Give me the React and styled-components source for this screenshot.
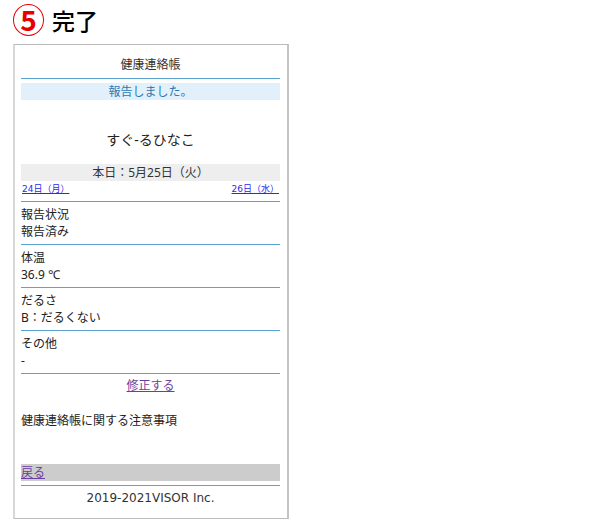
import React from "react";
//styles
import styled, { createGlobalStyle } from "styled-components";

const reports = [
  { label: "報告状況", value: "報告済み" },
  { label: "体温", value: "36.9 ℃" },
  { label: "だるさ", value: "B：だるくない" },
  { label: "その他", value: "-" },
];

const App = () => {
  return (
    <>
      <GlobalStyle />
      <Page>
        <StepHeading>
          <StepNumber>5</StepNumber>
          完了
        </StepHeading>
        <Card>
          <Title>健康連絡帳</Title>
          <Message role="status">報告しました。</Message>
          <Name>すぐ-るひなこ</Name>
          <Today>本日：5月25日（火）</Today>
          <DayNav>
            <a href="#prev">24日（月）</a>
            <a href="#next">26日（水）</a>
          </DayNav>
          <Report>
            {reports.map(({ label, value }) => (
              <Entry key={label}>
                <dt>{label}</dt>
                <dd>{value}</dd>
              </Entry>
            ))}
          </Report>
          <Edit>
            <StyledLink href="#edit">修正する</StyledLink>
          </Edit>
          <Notice>健康連絡帳に関する注意事項</Notice>
          <BackBar>
            <StyledLink href="#back">戻る</StyledLink>
          </BackBar>
          <Footer>2019-2021VISOR Inc.</Footer>
        </Card>
      </Page>
    </>
  );
};

export default App;

const line = "1px solid #5ba3d0";

const GlobalStyle = createGlobalStyle`
  * {
    margin: 0;
    padding: 0;
    box-sizing: border-box;
  }
  body {
    background: #fff;
    color: #333;
    font-family: "Noto Sans", "Noto Sans CJK JP", sans-serif;
    font-size: 12px;
    line-height: 17px;
  }
`;

const Page = styled.main`
  padding: 4px 13px 3px;
`;

const StepHeading = styled.h1`
  display: flex;
  align-items: center;
  gap: 8px;
  margin-bottom: 8px;
  color: #000;
  font-family: "Noto Sans CJK JP", sans-serif;
  font-size: 23px;
  font-weight: 500;
  line-height: 32px;
`;

const StepNumber = styled.span`
  width: 31px;
  height: 32px;
  border: 1px solid #e60000;
  border-radius: 50%;
  color: #e60000;
  font-size: 28px;
  font-weight: 700;
  line-height: 28px;
  text-align: center;
`;

const Card = styled.section`
  max-width: 276px;
  padding: 11px 7px 11px 6px;
  border: 1px solid #bbb;
  border-left: 2px solid #d8d8d8;
  border-right: 2px solid #c4c4c4;
`;

const Title = styled.h2`
  margin-bottom: 4px;
  padding-bottom: 5px;
  border-bottom: ${line};
  font-size: 12px;
  font-weight: 400;
  text-align: center;
`;

const Message = styled.p`
  background: #e2f0fc;
  color: #2a7ab5;
  text-align: center;
`;

const Name = styled.p`
  padding: 28px 0 12px;
  color: #222;
  font-size: 14px;
  line-height: 24px;
  text-align: center;
`;

const Today = styled.p`
  background: #eee;
  text-align: center;
`;

const DayNav = styled.nav`
  display: flex;
  justify-content: space-between;
  padding: 0 1px 3px;
  font-family: "DejaVu Sans", "Noto Sans CJK JP", sans-serif;
  font-size: 9px;
  a {
    color: #2a2aee;
  }
`;

const Report = styled.dl`
  border-bottom: ${line};
  color: #222;
`;

const Entry = styled.div`
  padding: 4px 0;
  border-top: ${line};
`;

const StyledLink = styled.a`
  color: #6b3fa0;
`;

const Edit = styled.p`
  padding-top: 3px;
  text-align: center;
`;

const Notice = styled.p`
  padding: 18px 0 35px;
  color: #222;
`;

const BackBar = styled.div`
  margin-bottom: 4px;
  background: #ccc;
`;

const Footer = styled.footer`
  padding-top: 4px;
  border-top: ${line};
  font-family: "DejaVu Sans", sans-serif;
  text-align: center;
`;
